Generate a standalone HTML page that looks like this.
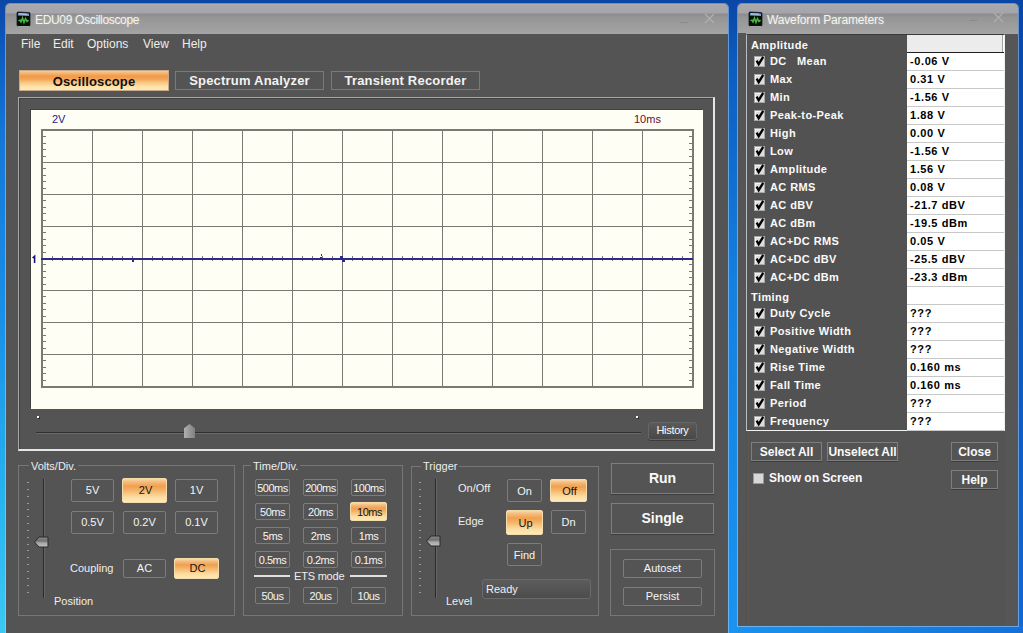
<!DOCTYPE html>
<html><head><meta charset="utf-8">
<style>
*{margin:0;padding:0;box-sizing:border-box}
html,body{width:1023px;height:633px;overflow:hidden}
body{position:relative;font-family:"Liberation Sans",sans-serif;background:linear-gradient(180deg,#0a46a6 0%,#0c5cc0 10%,#1480e0 45%,#1a94f0 100%)}
.a{position:absolute}
.win{position:absolute;background:#545454;border-radius:4px 4px 0 0;overflow:hidden;box-shadow:0 0 0 1px rgba(170,210,250,0.55)}
.tb{position:absolute;left:0;right:0;top:0;height:30px;background:linear-gradient(180deg,#bab2ae 0px,#a8a8ac 1px,#a6a6aa 9px,#8c8c8e 10px,#969696 14px,#a4a4a4 30px)}
.ttl{position:absolute;top:9px;font-size:12px;color:#f4f4ec;white-space:nowrap;text-shadow:0 0 3px rgba(255,255,255,0.35)}
.menu{position:absolute;font-size:12px;color:#eeeee6;top:33px}
.tab{position:absolute;height:19px;border:1px solid #7a7a7a;color:#f2f2f2;font-weight:bold;font-size:13px;text-align:center;line-height:17px;letter-spacing:0.2px}
.tab.on{background:linear-gradient(180deg,#f8d4a8 0px,#f5b878 3px,#f09a48 6px,#f2a456 9px,#f8c27c 12px,#fde0a4 16px,#fde8b4 18px);color:#101010;border:none;box-shadow:0 0 0 1px #c8a888 inset;line-height:23px;letter-spacing:0.15px}
.btn{position:absolute;border:1px solid #7c7c7c;border-radius:2px;color:#f4f4f4;font-size:11px;text-align:center;white-space:nowrap}
.btn.on{background:linear-gradient(180deg,#f9d8ae 0%,#f5bc7c 12%,#f0a050 32%,#f5b86e 52%,#fcdca0 78%,#fdeab8 100%);color:#141414;border-color:#f4dcac;padding-left:2px}
.sb{letter-spacing:-0.5px;padding-top:1px}
.grp{position:absolute;border:1px solid #767676}
.glbl{position:absolute;background:#545454;color:#eeeeee;font-size:11px;padding:0 2px;white-space:nowrap;line-height:14px}
.lbl{position:absolute;color:#eeeeee;font-size:11px;white-space:nowrap;line-height:14px}
.pl{position:absolute;color:#fafafa;font-size:11px;font-weight:bold;white-space:nowrap;line-height:12px;letter-spacing:0.4px}
.pv{position:absolute;color:#000;font-size:11px;font-weight:bold;white-space:nowrap;line-height:12px;letter-spacing:0.6px}
.cb{position:absolute;width:11px;height:11px;background:#dcdcdc;border:1px solid #a8a8a8;box-shadow:1px 1px 0 #f4f4f4 inset}
.cb svg{position:absolute;left:-1px;top:-1px}
.rb{position:absolute;border:1px solid #7e7e7e;box-shadow:0 1px 0 #3c3c3c;color:#fafafa;font-size:12px;font-weight:bold;text-align:center;line-height:18px;white-space:nowrap}
.thumbv{position:absolute;width:15px;height:12px}
</style></head><body>
<div class="a" style="left:0;top:0;width:6px;height:633px;background:linear-gradient(180deg,#0a46a6 0%,#0c5cc0 8%,#1478d8 22%,#1890e8 50%,#28b4f0 80%,#3cc8f4 100%)"></div>

<div class="a" style="left:1018px;top:0;width:5px;height:633px;background:linear-gradient(180deg,#0a46a6 0%,#0c56b8 40%,#1060c8 80%,#1468d4 100%)"></div>
<div class="a" style="left:738px;top:626px;width:285px;height:7px;background:linear-gradient(90deg,#1a90ec 0%,#1a86e4 40%,#1470d8 100%)"></div>
<!-- MAIN WINDOW -->
<div class="win" style="left:6px;top:4px;width:722px;height:640px">
  <div class="tb"></div>
  <div class="ttl" style="left:29px;letter-spacing:-0.33px">EDU09 Oscilloscope</div>
  <div class="menu" style="left:15px">File</div>
  <div class="menu" style="left:47px">Edit</div>
  <div class="menu" style="left:81px">Options</div>
  <div class="menu" style="left:137px">View</div>
  <div class="menu" style="left:176px">Help</div>
</div>
<svg class="a" style="left:16px;top:11px" width="15" height="16" viewBox="0 0 15 16">
<path d="M1,2 Q1,1 2,1 L13,1.5 Q14,1.5 14,2.5 L14,14 Q14,15 13,15 L2,15 Q1,15 1,14 Z" fill="#061006" stroke="#1a1a2a" stroke-width="0.8"/>
<path d="M2,2 L13,2.5 L13,5 L2,4.5 Z" fill="#7a9cd4"/>
<path d="M3,2.4 L11,2.7 L11,3.4 L3,3.2 Z" fill="#dce8f8"/>
<polyline points="2.5,10 4,9 5,11 6.5,7 8,11.5 9.5,7.5 11,10.5 12.5,9" fill="none" stroke="#46b846" stroke-width="1.5"/>
<rect x="2" y="15" width="11" height="1" fill="#e0e0e0" opacity="0.5"/>
</svg>
<div class="a" style="left:680px;top:22px;width:8px;height:1px;background:#8a8a8a"></div>
<svg class="a" style="left:704px;top:13px" width="11" height="11"><path d="M1,1 L10,10 M10,1 L1,10" stroke="#aeaeae" stroke-width="1.2"/></svg>

<!-- tabs -->
<div class="tab on" style="left:19px;top:70px;width:150px;height:21px">Oscilloscope</div>
<div class="tab" style="left:175px;top:71px;width:149px">Spectrum Analyzer</div>
<div class="tab" style="left:331px;top:71px;width:149px">Transient Recorder</div>

<!-- scope frame -->
<div class="a" style="left:18px;top:97px;width:697px;height:354px;border-top:1px solid #a8a8a8;border-left:1px solid #a8a8a8;border-right:2px solid #e6e6e6;border-bottom:2px solid #e6e6e6;box-shadow:1px 1px 0 #404040 inset"></div>
<div class="a" style="left:31px;top:110px;width:672px;height:299px;background:#fffef4;box-shadow:-1px -1px 0 #424242"></div>
<svg class="a" style="left:0;top:0" width="1023" height="633">
<rect x="92" y="129" width="1" height="259" fill="#7a7a72"/>
<rect x="142" y="129" width="1" height="259" fill="#7a7a72"/>
<rect x="192" y="129" width="1" height="259" fill="#7a7a72"/>
<rect x="242" y="129" width="1" height="259" fill="#7a7a72"/>
<rect x="292" y="129" width="1" height="259" fill="#7a7a72"/>
<rect x="342" y="129" width="1" height="259" fill="#7a7a72"/>
<rect x="392" y="129" width="1" height="259" fill="#7a7a72"/>
<rect x="442" y="129" width="1" height="259" fill="#7a7a72"/>
<rect x="492" y="129" width="1" height="259" fill="#7a7a72"/>
<rect x="542" y="129" width="1" height="259" fill="#7a7a72"/>
<rect x="592" y="129" width="1" height="259" fill="#7a7a72"/>
<rect x="642" y="129" width="1" height="259" fill="#7a7a72"/>
<rect x="41" y="162" width="653" height="1" fill="#7a7a72"/>
<rect x="41" y="194" width="653" height="1" fill="#7a7a72"/>
<rect x="41" y="226" width="653" height="1" fill="#7a7a72"/>
<rect x="41" y="258" width="653" height="1" fill="#7a7a72"/>
<rect x="41" y="290" width="653" height="1" fill="#7a7a72"/>
<rect x="41" y="322" width="653" height="1" fill="#7a7a72"/>
<rect x="41" y="354" width="653" height="1" fill="#7a7a72"/>
<rect x="41" y="129" width="653" height="2" fill="#7a7a72"/>
<rect x="41" y="386" width="653" height="2" fill="#7a7a72"/>
<rect x="41" y="129" width="2" height="259" fill="#7a7a72"/>
<rect x="692" y="129" width="2" height="259" fill="#7a7a72"/>
<rect x="43" y="136" width="3" height="1" fill="#7a7a72"/>
<rect x="689" y="136" width="3" height="1" fill="#7a7a72"/>
<rect x="43" y="143" width="3" height="1" fill="#7a7a72"/>
<rect x="689" y="143" width="3" height="1" fill="#7a7a72"/>
<rect x="43" y="149" width="3" height="1" fill="#7a7a72"/>
<rect x="689" y="149" width="3" height="1" fill="#7a7a72"/>
<rect x="43" y="156" width="3" height="1" fill="#7a7a72"/>
<rect x="689" y="156" width="3" height="1" fill="#7a7a72"/>
<rect x="43" y="168" width="3" height="1" fill="#7a7a72"/>
<rect x="689" y="168" width="3" height="1" fill="#7a7a72"/>
<rect x="43" y="175" width="3" height="1" fill="#7a7a72"/>
<rect x="689" y="175" width="3" height="1" fill="#7a7a72"/>
<rect x="43" y="181" width="3" height="1" fill="#7a7a72"/>
<rect x="689" y="181" width="3" height="1" fill="#7a7a72"/>
<rect x="43" y="188" width="3" height="1" fill="#7a7a72"/>
<rect x="689" y="188" width="3" height="1" fill="#7a7a72"/>
<rect x="43" y="200" width="3" height="1" fill="#7a7a72"/>
<rect x="689" y="200" width="3" height="1" fill="#7a7a72"/>
<rect x="43" y="207" width="3" height="1" fill="#7a7a72"/>
<rect x="689" y="207" width="3" height="1" fill="#7a7a72"/>
<rect x="43" y="213" width="3" height="1" fill="#7a7a72"/>
<rect x="689" y="213" width="3" height="1" fill="#7a7a72"/>
<rect x="43" y="220" width="3" height="1" fill="#7a7a72"/>
<rect x="689" y="220" width="3" height="1" fill="#7a7a72"/>
<rect x="43" y="232" width="3" height="1" fill="#7a7a72"/>
<rect x="689" y="232" width="3" height="1" fill="#7a7a72"/>
<rect x="43" y="239" width="3" height="1" fill="#7a7a72"/>
<rect x="689" y="239" width="3" height="1" fill="#7a7a72"/>
<rect x="43" y="245" width="3" height="1" fill="#7a7a72"/>
<rect x="689" y="245" width="3" height="1" fill="#7a7a72"/>
<rect x="43" y="252" width="3" height="1" fill="#7a7a72"/>
<rect x="689" y="252" width="3" height="1" fill="#7a7a72"/>
<rect x="43" y="264" width="3" height="1" fill="#7a7a72"/>
<rect x="689" y="264" width="3" height="1" fill="#7a7a72"/>
<rect x="43" y="271" width="3" height="1" fill="#7a7a72"/>
<rect x="689" y="271" width="3" height="1" fill="#7a7a72"/>
<rect x="43" y="277" width="3" height="1" fill="#7a7a72"/>
<rect x="689" y="277" width="3" height="1" fill="#7a7a72"/>
<rect x="43" y="284" width="3" height="1" fill="#7a7a72"/>
<rect x="689" y="284" width="3" height="1" fill="#7a7a72"/>
<rect x="43" y="296" width="3" height="1" fill="#7a7a72"/>
<rect x="689" y="296" width="3" height="1" fill="#7a7a72"/>
<rect x="43" y="303" width="3" height="1" fill="#7a7a72"/>
<rect x="689" y="303" width="3" height="1" fill="#7a7a72"/>
<rect x="43" y="309" width="3" height="1" fill="#7a7a72"/>
<rect x="689" y="309" width="3" height="1" fill="#7a7a72"/>
<rect x="43" y="316" width="3" height="1" fill="#7a7a72"/>
<rect x="689" y="316" width="3" height="1" fill="#7a7a72"/>
<rect x="43" y="328" width="3" height="1" fill="#7a7a72"/>
<rect x="689" y="328" width="3" height="1" fill="#7a7a72"/>
<rect x="43" y="335" width="3" height="1" fill="#7a7a72"/>
<rect x="689" y="335" width="3" height="1" fill="#7a7a72"/>
<rect x="43" y="341" width="3" height="1" fill="#7a7a72"/>
<rect x="689" y="341" width="3" height="1" fill="#7a7a72"/>
<rect x="43" y="348" width="3" height="1" fill="#7a7a72"/>
<rect x="689" y="348" width="3" height="1" fill="#7a7a72"/>
<rect x="43" y="360" width="3" height="1" fill="#7a7a72"/>
<rect x="689" y="360" width="3" height="1" fill="#7a7a72"/>
<rect x="43" y="367" width="3" height="1" fill="#7a7a72"/>
<rect x="689" y="367" width="3" height="1" fill="#7a7a72"/>
<rect x="43" y="373" width="3" height="1" fill="#7a7a72"/>
<rect x="689" y="373" width="3" height="1" fill="#7a7a72"/>
<rect x="43" y="380" width="3" height="1" fill="#7a7a72"/>
<rect x="689" y="380" width="3" height="1" fill="#7a7a72"/>
<rect x="52" y="256" width="1" height="5" fill="#7a7a72"/>
<rect x="62" y="256" width="1" height="5" fill="#7a7a72"/>
<rect x="72" y="256" width="1" height="5" fill="#7a7a72"/>
<rect x="82" y="256" width="1" height="5" fill="#7a7a72"/>
<rect x="102" y="256" width="1" height="5" fill="#7a7a72"/>
<rect x="112" y="256" width="1" height="5" fill="#7a7a72"/>
<rect x="122" y="256" width="1" height="5" fill="#7a7a72"/>
<rect x="132" y="256" width="1" height="5" fill="#7a7a72"/>
<rect x="152" y="256" width="1" height="5" fill="#7a7a72"/>
<rect x="162" y="256" width="1" height="5" fill="#7a7a72"/>
<rect x="172" y="256" width="1" height="5" fill="#7a7a72"/>
<rect x="182" y="256" width="1" height="5" fill="#7a7a72"/>
<rect x="202" y="256" width="1" height="5" fill="#7a7a72"/>
<rect x="212" y="256" width="1" height="5" fill="#7a7a72"/>
<rect x="222" y="256" width="1" height="5" fill="#7a7a72"/>
<rect x="232" y="256" width="1" height="5" fill="#7a7a72"/>
<rect x="252" y="256" width="1" height="5" fill="#7a7a72"/>
<rect x="262" y="256" width="1" height="5" fill="#7a7a72"/>
<rect x="272" y="256" width="1" height="5" fill="#7a7a72"/>
<rect x="282" y="256" width="1" height="5" fill="#7a7a72"/>
<rect x="302" y="256" width="1" height="5" fill="#7a7a72"/>
<rect x="312" y="256" width="1" height="5" fill="#7a7a72"/>
<rect x="322" y="256" width="1" height="5" fill="#7a7a72"/>
<rect x="332" y="256" width="1" height="5" fill="#7a7a72"/>
<rect x="352" y="256" width="1" height="5" fill="#7a7a72"/>
<rect x="362" y="256" width="1" height="5" fill="#7a7a72"/>
<rect x="372" y="256" width="1" height="5" fill="#7a7a72"/>
<rect x="382" y="256" width="1" height="5" fill="#7a7a72"/>
<rect x="402" y="256" width="1" height="5" fill="#7a7a72"/>
<rect x="412" y="256" width="1" height="5" fill="#7a7a72"/>
<rect x="422" y="256" width="1" height="5" fill="#7a7a72"/>
<rect x="432" y="256" width="1" height="5" fill="#7a7a72"/>
<rect x="452" y="256" width="1" height="5" fill="#7a7a72"/>
<rect x="462" y="256" width="1" height="5" fill="#7a7a72"/>
<rect x="472" y="256" width="1" height="5" fill="#7a7a72"/>
<rect x="482" y="256" width="1" height="5" fill="#7a7a72"/>
<rect x="502" y="256" width="1" height="5" fill="#7a7a72"/>
<rect x="512" y="256" width="1" height="5" fill="#7a7a72"/>
<rect x="522" y="256" width="1" height="5" fill="#7a7a72"/>
<rect x="532" y="256" width="1" height="5" fill="#7a7a72"/>
<rect x="552" y="256" width="1" height="5" fill="#7a7a72"/>
<rect x="562" y="256" width="1" height="5" fill="#7a7a72"/>
<rect x="572" y="256" width="1" height="5" fill="#7a7a72"/>
<rect x="582" y="256" width="1" height="5" fill="#7a7a72"/>
<rect x="602" y="256" width="1" height="5" fill="#7a7a72"/>
<rect x="612" y="256" width="1" height="5" fill="#7a7a72"/>
<rect x="622" y="256" width="1" height="5" fill="#7a7a72"/>
<rect x="632" y="256" width="1" height="5" fill="#7a7a72"/>
<rect x="652" y="256" width="1" height="5" fill="#7a7a72"/>
<rect x="662" y="256" width="1" height="5" fill="#7a7a72"/>
<rect x="672" y="256" width="1" height="5" fill="#7a7a72"/>
<rect x="682" y="256" width="1" height="5" fill="#7a7a72"/>
<rect x="41" y="258" width="652" height="2" fill="#2c2a88"/>
<path d="M32.6,258 L34.6,256.2 L34.6,263" fill="none" stroke="#16167a" stroke-width="1.6"/>
<rect x="132" y="260" width="2" height="2" fill="#2c2a88"/>
<rect x="321" y="254" width="1" height="2" fill="#2c2a88"/>
<rect x="320" y="257" width="2" height="1" fill="#2c2a88"/>
<rect x="340" y="256" width="3" height="2" fill="#2c2a88"/>
<rect x="342" y="260" width="3" height="2" fill="#2c2a88"/>
</svg>
<div class="a" style="left:52px;top:113px;font-size:11px;color:#1a1a8a">2V</div>
<div class="a" style="left:634px;top:113px;font-size:11px;color:#6a0a30">10ms</div>


<!-- slider -->
<div class="a" style="left:37px;top:416px;width:2px;height:2px;background:#fff;box-shadow:1px 1px 0 #2e2e2e"></div>
<div class="a" style="left:636px;top:416px;width:2px;height:2px;background:#fff;box-shadow:1px 1px 0 #2e2e2e"></div>
<div class="a" style="left:36px;top:432px;width:605px;height:1px;background:#2e2e2e"></div>
<div class="a" style="left:36px;top:433px;width:605px;height:1px;background:#6a6a6a"></div>
<div class="a" style="left:184px;top:424px;width:11px;height:14px;background:linear-gradient(90deg,#b0b0b0,#808080);clip-path:polygon(50% 0,100% 30%,100% 100%,0 100%,0 30%)"></div>
<div class="rb" style="left:648px;top:422px;width:49px;height:18px;border-radius:3px;font-weight:normal;font-size:11px;line-height:14px;letter-spacing:-0.3px;background:linear-gradient(180deg,#5a5a5a,#484848);border-color:#666">History</div>

<!-- Volts/Div group -->
<div class="grp" style="left:18px;top:465px;width:217px;height:151px"></div>
<div class="glbl" style="left:29px;top:459px">Volts/Div.</div>
<div class="a" style="left:27px;top:482px;width:2px;height:1px;background:#9a9a9a"></div>
<div class="a" style="left:27px;top:489px;width:2px;height:1px;background:#9a9a9a"></div>
<div class="a" style="left:27px;top:496px;width:2px;height:1px;background:#9a9a9a"></div>
<div class="a" style="left:27px;top:503px;width:2px;height:1px;background:#9a9a9a"></div>
<div class="a" style="left:27px;top:509px;width:2px;height:1px;background:#9a9a9a"></div>
<div class="a" style="left:27px;top:516px;width:2px;height:1px;background:#9a9a9a"></div>
<div class="a" style="left:27px;top:523px;width:2px;height:1px;background:#9a9a9a"></div>
<div class="a" style="left:27px;top:530px;width:2px;height:1px;background:#9a9a9a"></div>
<div class="a" style="left:27px;top:537px;width:2px;height:1px;background:#9a9a9a"></div>
<div class="a" style="left:27px;top:544px;width:2px;height:1px;background:#9a9a9a"></div>
<div class="a" style="left:27px;top:550px;width:2px;height:1px;background:#9a9a9a"></div>
<div class="a" style="left:27px;top:557px;width:2px;height:1px;background:#9a9a9a"></div>
<div class="a" style="left:27px;top:564px;width:2px;height:1px;background:#9a9a9a"></div>
<div class="a" style="left:27px;top:571px;width:2px;height:1px;background:#9a9a9a"></div>
<div class="a" style="left:27px;top:578px;width:2px;height:1px;background:#9a9a9a"></div>
<div class="a" style="left:27px;top:585px;width:2px;height:1px;background:#9a9a9a"></div>
<div class="a" style="left:27px;top:592px;width:2px;height:1px;background:#9a9a9a"></div>
<div class="a" style="left:43px;top:479px;width:1px;height:119px;background:#2a2a2a"></div>
<div class="a" style="left:44px;top:479px;width:1px;height:119px;background:#666"></div>
<div class="thumbv" style="left:34px;top:534px"><svg width="15" height="12" viewBox="0 0 15 12"><defs><linearGradient id="tg" x1="0" y1="0" x2="0" y2="1"><stop offset="0" stop-color="#8a8a8a"/><stop offset="0.4" stop-color="#707070"/><stop offset="0.6" stop-color="#a8a8a8"/><stop offset="1" stop-color="#c0c0c0"/></linearGradient></defs><path d="M0.5,6 L5,1 L14,1 L14,11 L5,11 Z" fill="url(#tg)" stroke="#2a2a2a" stroke-width="1"/></svg></div>
<div class="btn" style="left:71px;top:479px;width:43px;height:23px;line-height:21px">5V</div>
<div class="btn on" style="left:122px;top:478px;width:45px;height:25px;line-height:23px">2V</div>
<div class="btn" style="left:175px;top:479px;width:43px;height:23px;line-height:21px">1V</div>
<div class="btn" style="left:71px;top:511px;width:43px;height:23px;line-height:21px">0.5V</div>
<div class="btn" style="left:123px;top:511px;width:43px;height:23px;line-height:21px">0.2V</div>
<div class="btn" style="left:175px;top:511px;width:43px;height:23px;line-height:21px">0.1V</div>
<div class="lbl" style="left:70px;top:561px">Coupling</div>
<div class="btn" style="left:123px;top:559px;width:43px;height:19px;line-height:17px">AC</div>
<div class="btn on" style="left:174px;top:558px;width:45px;height:21px;line-height:19px">DC</div>
<div class="lbl" style="left:54px;top:594px">Position</div>

<!-- Time/Div group -->
<div class="grp" style="left:243px;top:465px;width:160px;height:151px"></div>
<div class="glbl" style="left:251px;top:459px">Time/Div.</div>
<div class="btn sb" style="left:255px;top:479px;width:35px;height:17px;line-height:15px">500ms</div>
<div class="btn sb" style="left:303px;top:479px;width:35px;height:17px;line-height:15px">200ms</div>
<div class="btn sb" style="left:351px;top:479px;width:35px;height:17px;line-height:15px">100ms</div>
<div class="btn sb" style="left:255px;top:503px;width:35px;height:17px;line-height:15px">50ms</div>
<div class="btn sb" style="left:303px;top:503px;width:35px;height:17px;line-height:15px">20ms</div>
<div class="btn sb on" style="left:350px;top:502px;width:37px;height:19px;line-height:17px">10ms</div>
<div class="btn sb" style="left:255px;top:527px;width:35px;height:17px;line-height:15px">5ms</div>
<div class="btn sb" style="left:303px;top:527px;width:35px;height:17px;line-height:15px">2ms</div>
<div class="btn sb" style="left:351px;top:527px;width:35px;height:17px;line-height:15px">1ms</div>
<div class="btn sb" style="left:255px;top:551px;width:35px;height:17px;line-height:15px">0.5ms</div>
<div class="btn sb" style="left:303px;top:551px;width:35px;height:17px;line-height:15px">0.2ms</div>
<div class="btn sb" style="left:351px;top:551px;width:35px;height:17px;line-height:15px">0.1ms</div>
<div class="a" style="left:254px;top:575px;width:36px;height:2px;background:#e0e0e0"></div>
<div class="a" style="left:350px;top:575px;width:37px;height:2px;background:#e0e0e0"></div>
<div class="lbl" style="left:294px;top:569px;letter-spacing:-0.2px">ETS mode</div>
<div class="btn sb" style="left:255px;top:587px;width:35px;height:17px;line-height:15px">50us</div>
<div class="btn sb" style="left:303px;top:587px;width:35px;height:17px;line-height:15px">20us</div>
<div class="btn sb" style="left:351px;top:587px;width:35px;height:17px;line-height:15px">10us</div>

<!-- Trigger group -->
<div class="grp" style="left:411px;top:466px;width:188px;height:150px"></div>
<div class="glbl" style="left:421px;top:459px">Trigger</div>
<div class="a" style="left:419px;top:482px;width:2px;height:1px;background:#9a9a9a"></div>
<div class="a" style="left:419px;top:489px;width:2px;height:1px;background:#9a9a9a"></div>
<div class="a" style="left:419px;top:496px;width:2px;height:1px;background:#9a9a9a"></div>
<div class="a" style="left:419px;top:503px;width:2px;height:1px;background:#9a9a9a"></div>
<div class="a" style="left:419px;top:509px;width:2px;height:1px;background:#9a9a9a"></div>
<div class="a" style="left:419px;top:516px;width:2px;height:1px;background:#9a9a9a"></div>
<div class="a" style="left:419px;top:523px;width:2px;height:1px;background:#9a9a9a"></div>
<div class="a" style="left:419px;top:530px;width:2px;height:1px;background:#9a9a9a"></div>
<div class="a" style="left:419px;top:537px;width:2px;height:1px;background:#9a9a9a"></div>
<div class="a" style="left:419px;top:544px;width:2px;height:1px;background:#9a9a9a"></div>
<div class="a" style="left:419px;top:550px;width:2px;height:1px;background:#9a9a9a"></div>
<div class="a" style="left:419px;top:557px;width:2px;height:1px;background:#9a9a9a"></div>
<div class="a" style="left:419px;top:564px;width:2px;height:1px;background:#9a9a9a"></div>
<div class="a" style="left:419px;top:571px;width:2px;height:1px;background:#9a9a9a"></div>
<div class="a" style="left:419px;top:578px;width:2px;height:1px;background:#9a9a9a"></div>
<div class="a" style="left:419px;top:585px;width:2px;height:1px;background:#9a9a9a"></div>
<div class="a" style="left:419px;top:592px;width:2px;height:1px;background:#9a9a9a"></div>
<div class="a" style="left:435px;top:479px;width:1px;height:119px;background:#2a2a2a"></div>
<div class="a" style="left:436px;top:479px;width:1px;height:119px;background:#666"></div>
<div class="thumbv" style="left:426px;top:533px"><svg width="15" height="12" viewBox="0 0 15 12"><defs><linearGradient id="tg2" x1="0" y1="0" x2="0" y2="1"><stop offset="0" stop-color="#8a8a8a"/><stop offset="0.4" stop-color="#707070"/><stop offset="0.6" stop-color="#a8a8a8"/><stop offset="1" stop-color="#c0c0c0"/></linearGradient></defs><path d="M0.5,6 L5,1 L14,1 L14,11 L5,11 Z" fill="url(#tg2)" stroke="#2a2a2a" stroke-width="1"/></svg></div>
<div class="lbl" style="left:458px;top:481px">On/Off</div>
<div class="btn" style="left:507px;top:479px;width:35px;height:23px;line-height:22px">On</div>
<div class="btn on" style="left:550px;top:479px;width:37px;height:23px;line-height:22px">Off</div>
<div class="lbl" style="left:458px;top:514px">Edge</div>
<div class="btn on" style="left:506px;top:510px;width:37px;height:25px;line-height:24px">Up</div>
<div class="btn" style="left:551px;top:510px;width:35px;height:24px;line-height:23px">Dn</div>
<div class="btn" style="left:507px;top:543px;width:35px;height:23px;line-height:22px">Find</div>
<div class="a" style="left:482px;top:579px;width:109px;height:20px;border-radius:3px;background:linear-gradient(180deg,#5c5c5c,#4c4c4c);border:1px solid #6a6a6a;color:#f0f0f0;font-size:11px;line-height:18px;padding-left:3px">Ready</div>
<div class="lbl" style="left:446px;top:594px">Level</div>

<!-- Run / Single -->
<div class="rb" style="left:611px;top:463px;width:103px;height:31px;line-height:29px;font-size:14px">Run</div>
<div class="rb" style="left:611px;top:503px;width:103px;height:31px;line-height:29px;font-size:14px">Single</div>
<div class="grp" style="left:610px;top:549px;width:105px;height:67px"></div>
<div class="btn" style="left:623px;top:559px;width:79px;height:19px;line-height:17px">Autoset</div>
<div class="btn" style="left:623px;top:587px;width:79px;height:19px;line-height:17px">Persist</div>

<!-- RIGHT WINDOW -->
<div class="win" style="left:738px;top:4px;width:280px;height:622px;background:#545454">
  <div class="tb"></div>
  <div class="ttl" style="left:29px;letter-spacing:-0.15px">Waveform Parameters</div>
</div>
<svg class="a" style="left:748px;top:11px" width="15" height="16" viewBox="0 0 15 16">
<path d="M1,2 Q1,1 2,1 L13,1.5 Q14,1.5 14,2.5 L14,14 Q14,15 13,15 L2,15 Q1,15 1,14 Z" fill="#061006" stroke="#1a1a2a" stroke-width="0.8"/>
<path d="M2,2 L13,2.5 L13,5 L2,4.5 Z" fill="#7a9cd4"/>
<path d="M3,2.4 L11,2.7 L11,3.4 L3,3.2 Z" fill="#dce8f8"/>
<polyline points="2.5,10 4,9 5,11 6.5,7 8,11.5 9.5,7.5 11,10.5 12.5,9" fill="none" stroke="#46b846" stroke-width="1.5"/>
<rect x="2" y="15" width="11" height="1" fill="#e0e0e0" opacity="0.5"/>
</svg>
<div class="a" style="left:969px;top:20px;width:8px;height:1px;background:#8a8a8a"></div>
<svg class="a" style="left:993px;top:12px" width="11" height="11"><path d="M1,1 L10,10 M10,1 L1,10" stroke="#aeaeae" stroke-width="1.2"/></svg>
<div class="a" style="left:1005px;top:34px;width:13px;height:592px;background:#575656"></div>
<div class="a" style="left:738px;top:33px;width:8px;height:593px;background:#565555"></div>
<div class="a" style="left:746px;top:34px;width:259px;height:397px;background:#525252;border-top:1px solid #3a3a3a;border-left:1px solid #b8bcc4;border-right:1px solid #f0f0f0;border-bottom:1px solid #f0f0f0"></div>
<div class="a" style="left:907px;top:35px;width:97px;height:395px;background:#fff"></div>
<div class="a" style="left:907px;top:35px;width:96px;height:17px;background:#ececec;border-right:1px solid #a0a0a0"></div>
<div class="a" style="left:907px;top:52px;width:97px;height:1px;background:#202020"></div>
<div class="pl" style="left:751px;top:39px">Amplitude</div>
<div class="cb" style="left:754px;top:56px"><svg width="11" height="11" viewBox="0 0 11 11"><path d="M2.6,4.6 L4.7,8.2 L9.2,0.8" fill="none" stroke="#000" stroke-width="2.3" stroke-linejoin="miter"/></svg></div>
<div class="pl" style="left:770px;top:55px">DC&nbsp;&nbsp;&nbsp;Mean</div>
<div class="pv" style="left:910px;top:55px">-0.06 V</div>
<div class="a" style="left:907px;top:70px;width:97px;height:1px;background:#c8c8c8"></div>
<div class="cb" style="left:754px;top:74px"><svg width="11" height="11" viewBox="0 0 11 11"><path d="M2.6,4.6 L4.7,8.2 L9.2,0.8" fill="none" stroke="#000" stroke-width="2.3" stroke-linejoin="miter"/></svg></div>
<div class="pl" style="left:770px;top:73px">Max</div>
<div class="pv" style="left:910px;top:73px">0.31 V</div>
<div class="a" style="left:907px;top:88px;width:97px;height:1px;background:#c8c8c8"></div>
<div class="cb" style="left:754px;top:92px"><svg width="11" height="11" viewBox="0 0 11 11"><path d="M2.6,4.6 L4.7,8.2 L9.2,0.8" fill="none" stroke="#000" stroke-width="2.3" stroke-linejoin="miter"/></svg></div>
<div class="pl" style="left:770px;top:91px">Min</div>
<div class="pv" style="left:910px;top:91px">-1.56 V</div>
<div class="a" style="left:907px;top:106px;width:97px;height:1px;background:#c8c8c8"></div>
<div class="cb" style="left:754px;top:110px"><svg width="11" height="11" viewBox="0 0 11 11"><path d="M2.6,4.6 L4.7,8.2 L9.2,0.8" fill="none" stroke="#000" stroke-width="2.3" stroke-linejoin="miter"/></svg></div>
<div class="pl" style="left:770px;top:109px">Peak-to-Peak</div>
<div class="pv" style="left:910px;top:109px">1.88 V</div>
<div class="a" style="left:907px;top:124px;width:97px;height:1px;background:#c8c8c8"></div>
<div class="cb" style="left:754px;top:128px"><svg width="11" height="11" viewBox="0 0 11 11"><path d="M2.6,4.6 L4.7,8.2 L9.2,0.8" fill="none" stroke="#000" stroke-width="2.3" stroke-linejoin="miter"/></svg></div>
<div class="pl" style="left:770px;top:127px">High</div>
<div class="pv" style="left:910px;top:127px">0.00 V</div>
<div class="a" style="left:907px;top:142px;width:97px;height:1px;background:#c8c8c8"></div>
<div class="cb" style="left:754px;top:146px"><svg width="11" height="11" viewBox="0 0 11 11"><path d="M2.6,4.6 L4.7,8.2 L9.2,0.8" fill="none" stroke="#000" stroke-width="2.3" stroke-linejoin="miter"/></svg></div>
<div class="pl" style="left:770px;top:145px">Low</div>
<div class="pv" style="left:910px;top:145px">-1.56 V</div>
<div class="a" style="left:907px;top:160px;width:97px;height:1px;background:#c8c8c8"></div>
<div class="cb" style="left:754px;top:164px"><svg width="11" height="11" viewBox="0 0 11 11"><path d="M2.6,4.6 L4.7,8.2 L9.2,0.8" fill="none" stroke="#000" stroke-width="2.3" stroke-linejoin="miter"/></svg></div>
<div class="pl" style="left:770px;top:163px">Amplitude</div>
<div class="pv" style="left:910px;top:163px">1.56 V</div>
<div class="a" style="left:907px;top:178px;width:97px;height:1px;background:#c8c8c8"></div>
<div class="cb" style="left:754px;top:182px"><svg width="11" height="11" viewBox="0 0 11 11"><path d="M2.6,4.6 L4.7,8.2 L9.2,0.8" fill="none" stroke="#000" stroke-width="2.3" stroke-linejoin="miter"/></svg></div>
<div class="pl" style="left:770px;top:181px">AC RMS</div>
<div class="pv" style="left:910px;top:181px">0.08 V</div>
<div class="a" style="left:907px;top:196px;width:97px;height:1px;background:#c8c8c8"></div>
<div class="cb" style="left:754px;top:200px"><svg width="11" height="11" viewBox="0 0 11 11"><path d="M2.6,4.6 L4.7,8.2 L9.2,0.8" fill="none" stroke="#000" stroke-width="2.3" stroke-linejoin="miter"/></svg></div>
<div class="pl" style="left:770px;top:199px">AC dBV</div>
<div class="pv" style="left:910px;top:199px">-21.7 dBV</div>
<div class="a" style="left:907px;top:214px;width:97px;height:1px;background:#c8c8c8"></div>
<div class="cb" style="left:754px;top:218px"><svg width="11" height="11" viewBox="0 0 11 11"><path d="M2.6,4.6 L4.7,8.2 L9.2,0.8" fill="none" stroke="#000" stroke-width="2.3" stroke-linejoin="miter"/></svg></div>
<div class="pl" style="left:770px;top:217px">AC dBm</div>
<div class="pv" style="left:910px;top:217px">-19.5 dBm</div>
<div class="a" style="left:907px;top:232px;width:97px;height:1px;background:#c8c8c8"></div>
<div class="cb" style="left:754px;top:236px"><svg width="11" height="11" viewBox="0 0 11 11"><path d="M2.6,4.6 L4.7,8.2 L9.2,0.8" fill="none" stroke="#000" stroke-width="2.3" stroke-linejoin="miter"/></svg></div>
<div class="pl" style="left:770px;top:235px">AC+DC RMS</div>
<div class="pv" style="left:910px;top:235px">0.05 V</div>
<div class="a" style="left:907px;top:250px;width:97px;height:1px;background:#c8c8c8"></div>
<div class="cb" style="left:754px;top:254px"><svg width="11" height="11" viewBox="0 0 11 11"><path d="M2.6,4.6 L4.7,8.2 L9.2,0.8" fill="none" stroke="#000" stroke-width="2.3" stroke-linejoin="miter"/></svg></div>
<div class="pl" style="left:770px;top:253px">AC+DC dBV</div>
<div class="pv" style="left:910px;top:253px">-25.5 dBV</div>
<div class="a" style="left:907px;top:268px;width:97px;height:1px;background:#c8c8c8"></div>
<div class="cb" style="left:754px;top:272px"><svg width="11" height="11" viewBox="0 0 11 11"><path d="M2.6,4.6 L4.7,8.2 L9.2,0.8" fill="none" stroke="#000" stroke-width="2.3" stroke-linejoin="miter"/></svg></div>
<div class="pl" style="left:770px;top:271px">AC+DC dBm</div>
<div class="pv" style="left:910px;top:271px">-23.3 dBm</div>
<div class="a" style="left:907px;top:286px;width:97px;height:1px;background:#c8c8c8"></div>
<div class="pl" style="left:751px;top:291px">Timing</div>
<div class="a" style="left:907px;top:304px;width:97px;height:1px;background:#c8c8c8"></div>
<div class="cb" style="left:754px;top:308px"><svg width="11" height="11" viewBox="0 0 11 11"><path d="M2.6,4.6 L4.7,8.2 L9.2,0.8" fill="none" stroke="#000" stroke-width="2.3" stroke-linejoin="miter"/></svg></div>
<div class="pl" style="left:770px;top:307px">Duty Cycle</div>
<div class="pv" style="left:910px;top:307px">???</div>
<div class="a" style="left:907px;top:322px;width:97px;height:1px;background:#c8c8c8"></div>
<div class="cb" style="left:754px;top:326px"><svg width="11" height="11" viewBox="0 0 11 11"><path d="M2.6,4.6 L4.7,8.2 L9.2,0.8" fill="none" stroke="#000" stroke-width="2.3" stroke-linejoin="miter"/></svg></div>
<div class="pl" style="left:770px;top:325px">Positive Width</div>
<div class="pv" style="left:910px;top:325px">???</div>
<div class="a" style="left:907px;top:340px;width:97px;height:1px;background:#c8c8c8"></div>
<div class="cb" style="left:754px;top:344px"><svg width="11" height="11" viewBox="0 0 11 11"><path d="M2.6,4.6 L4.7,8.2 L9.2,0.8" fill="none" stroke="#000" stroke-width="2.3" stroke-linejoin="miter"/></svg></div>
<div class="pl" style="left:770px;top:343px">Negative Width</div>
<div class="pv" style="left:910px;top:343px">???</div>
<div class="a" style="left:907px;top:358px;width:97px;height:1px;background:#c8c8c8"></div>
<div class="cb" style="left:754px;top:362px"><svg width="11" height="11" viewBox="0 0 11 11"><path d="M2.6,4.6 L4.7,8.2 L9.2,0.8" fill="none" stroke="#000" stroke-width="2.3" stroke-linejoin="miter"/></svg></div>
<div class="pl" style="left:770px;top:361px">Rise Time</div>
<div class="pv" style="left:910px;top:361px">0.160 ms</div>
<div class="a" style="left:907px;top:376px;width:97px;height:1px;background:#c8c8c8"></div>
<div class="cb" style="left:754px;top:380px"><svg width="11" height="11" viewBox="0 0 11 11"><path d="M2.6,4.6 L4.7,8.2 L9.2,0.8" fill="none" stroke="#000" stroke-width="2.3" stroke-linejoin="miter"/></svg></div>
<div class="pl" style="left:770px;top:379px">Fall Time</div>
<div class="pv" style="left:910px;top:379px">0.160 ms</div>
<div class="a" style="left:907px;top:394px;width:97px;height:1px;background:#c8c8c8"></div>
<div class="cb" style="left:754px;top:398px"><svg width="11" height="11" viewBox="0 0 11 11"><path d="M2.6,4.6 L4.7,8.2 L9.2,0.8" fill="none" stroke="#000" stroke-width="2.3" stroke-linejoin="miter"/></svg></div>
<div class="pl" style="left:770px;top:397px">Period</div>
<div class="pv" style="left:910px;top:397px">???</div>
<div class="a" style="left:907px;top:412px;width:97px;height:1px;background:#c8c8c8"></div>
<div class="cb" style="left:754px;top:416px"><svg width="11" height="11" viewBox="0 0 11 11"><path d="M2.6,4.6 L4.7,8.2 L9.2,0.8" fill="none" stroke="#000" stroke-width="2.3" stroke-linejoin="miter"/></svg></div>
<div class="pl" style="left:770px;top:415px">Frequency</div>
<div class="pv" style="left:910px;top:415px">???</div>
<div class="a" style="left:907px;top:430px;width:97px;height:1px;background:#c8c8c8"></div>
<div class="a" style="left:748px;top:431px;width:1px;height:195px;background:#5e5852"></div>
<div class="rb" style="left:751px;top:442px;width:71px;height:19px">Select All</div>
<div class="rb" style="left:827px;top:442px;width:71px;height:19px">Unselect All</div>
<div class="rb" style="left:951px;top:442px;width:47px;height:19px">Close</div>
<div class="rb" style="left:951px;top:470px;width:47px;height:19px">Help</div>
<div class="a" style="left:753px;top:473px;width:11px;height:11px;background:#d8d8d8;border:1px solid #9a9a9a"></div>
<div class="pl" style="left:769px;top:472px;font-size:12px;letter-spacing:0">Show on Screen</div>

</body></html>
